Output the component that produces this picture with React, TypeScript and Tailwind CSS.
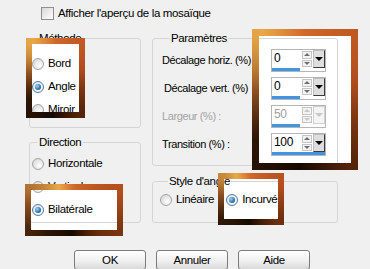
import React from "react";

const frameBorder =
  "[border-image:conic-gradient(from_0deg,#d2672a,#b04c1c_70deg,#6a2e0c_130deg,#140900_185deg,#2e1606_230deg,#8e5020_280deg,#e8a848_325deg,#d2672a)_1]";

const Radio = ({ checked }: { checked?: boolean }) => (
  <span
    className={
      checked
        ? "flex items-center justify-center w-[12px] h-[12px] shrink-0 rounded-full border border-[#4f7ba1] bg-[radial-gradient(circle_at_65%_65%,#ffffff,#d6dde4)]"
        : "flex items-center justify-center w-[12px] h-[12px] shrink-0 rounded-full border border-[#a5a5a5] bg-[radial-gradient(circle_at_65%_65%,#ffffff,#cfcfcf)]"
    }
  >
    {checked && (
      <span className="w-[6px] h-[6px] rounded-full bg-[radial-gradient(circle_at_35%_35%,#9fd4f5,#236aa3_65%,#123f66)]" />
    )}
  </span>
);

const RadioRow = ({ label, checked }: { label: string; checked?: boolean }) => (
  <div className="flex items-center gap-[4px] h-[23px]">
    <Radio checked={checked} />
    <span>{label}</span>
  </div>
);

const Spin = ({
  value,
  disabled,
  full,
}: {
  value: string;
  disabled?: boolean;
  full?: boolean;
}) => (
  <div className="flex flex-col w-[55px] h-[23px] border border-[#b5b5b5] bg-white">
    <div className="flex flex-1">
      <span
        className={
          disabled
            ? "flex-1 pl-[2px] leading-[17px] text-[12px] text-[#a0a0a0]"
            : "flex-1 pl-[2px] leading-[17px] text-[12px]"
        }
      >
        {value}
      </span>
      <div className="flex flex-col gap-px w-[10px] py-px mr-px">
        <div className="flex flex-1 items-center justify-center border border-[#c5c5c5] bg-[#f3f3f3]">
          <div
            className={
              disabled
                ? "w-0 h-0 border-x-[3px] border-x-transparent border-b-[3px] border-b-[#c8c8c8]"
                : "w-0 h-0 border-x-[3px] border-x-transparent border-b-[3px] border-b-[#6e6e6e]"
            }
          />
        </div>
        <div className="flex flex-1 items-center justify-center border border-[#c5c5c5] bg-[#f3f3f3]">
          <div
            className={
              disabled
                ? "w-0 h-0 border-x-[3px] border-x-transparent border-t-[3px] border-t-[#c8c8c8]"
                : "w-0 h-0 border-x-[3px] border-x-transparent border-t-[3px] border-t-[#6e6e6e]"
            }
          />
        </div>
      </div>
      <div
        className={
          disabled
            ? "flex items-center justify-center w-[12px] border border-[#d0d0d0] bg-[#f4f4f4]"
            : "flex items-center justify-center w-[12px] border border-t-[#bdbdbd] border-l-[#bdbdbd] border-r-[#3a3a3a] border-b-[#3a3a3a] bg-[#dedede]"
        }
      >
        <div
          className={
            disabled
              ? "w-0 h-0 border-x-[4px] border-x-transparent border-t-[4px] border-t-[#c8c8c8]"
              : "w-0 h-0 border-x-[4px] border-x-transparent border-t-[4px] border-t-black"
          }
        />
      </div>
    </div>
    <div className={full ? "h-[3px] w-full bg-[#3f95e4]" : "h-[3px] w-[28px] bg-[#3f95e4]"} />
  </div>
);

const ParamRow = ({
  label,
  value,
  disabled,
  full,
  indent,
}: {
  label: string;
  value: string;
  disabled?: boolean;
  full?: boolean;
  indent?: boolean;
}) => (
  <div className="flex items-center h-[23px]">
    <span
      className={
        "w-[109px] text-[11px] tracking-[-0.4px] " +
        (indent ? "pl-[2px] " : "") +
        (disabled ? "text-[#a3a3a3]" : "")
      }
    >
      {label}
    </span>
    <Spin value={value} disabled={disabled} full={full} />
  </div>
);

const Btn = ({ label }: { label: string }) => (
  <button className="w-[72px] h-[20px] rounded-[3px] border border-[#7b7b7b] bg-[linear-gradient(#ffffff,#f0f0f0_55%,#d9d9d9)] leading-[18px]">
    {label}
  </button>
);

export default function App() {
  return (
    <div className="relative w-[370px] h-[269px] overflow-hidden bg-[#f0f0f0] text-[11.5px] tracking-[-0.35px] leading-[15px] text-black font-['Liberation_Sans',Arial,sans-serif]">
      {/* white fills behind the highlight frames */}
      <div className="absolute z-0 left-[32px] top-[44px] w-[47px] h-[68px] bg-white" />
      <div className="absolute z-0 left-[31px] top-[190px] w-[86px] h-[40px] bg-white" />
      <div className="absolute z-0 left-[259px] top-[36px] w-[92px] h-[127px] bg-white" />
      <div className="absolute z-0 left-[224px] top-[179px] w-[54px] h-[40px] bg-white" />

      <div className="relative z-10 flex flex-col h-full">
        <div className="flex items-center gap-[4px] pl-[41px] pt-[6px]">
          <span className="w-[13px] h-[13px] border border-[#8f8f8f] bg-[linear-gradient(135deg,#d8d8d8,#ffffff)]" />
          <span>Afficher l'aperçu de la mosaïque</span>
        </div>

        <div className="flex gap-[11px] pl-[29px] mt-[10px]">
          <div className="flex flex-col gap-[7px] w-[112px]">
            <fieldset className="h-[97px] border border-[#d5d5d5] rounded-[3px] pl-[2px] pt-[7px]">
              <legend className="ml-[5px] px-[2px] leading-[14px]">Méthode</legend>
              <RadioRow label="Bord" />
              <RadioRow label="Angle" checked />
              <RadioRow label="Miroir" />
            </fieldset>
            <fieldset className="h-[88px] border border-[#d5d5d5] rounded-[3px] pl-[2px] pt-[3px]">
              <legend className="ml-[5px] px-[2px] leading-[14px]">Direction</legend>
              <RadioRow label="Horizontale" />
              <RadioRow label="Verticale" />
              <RadioRow label="Bilatérale" checked />
            </fieldset>
          </div>

          <div className="flex flex-col gap-[8px] w-[186px]">
            <fieldset className="flex flex-col gap-[5px] h-[135px] border border-[#d5d5d5] rounded-[3px] pl-[9px] pt-[4px]">
              <legend className="ml-[8px] px-[1px] leading-[14px]">Paramètres</legend>
              <ParamRow label="Décalage horiz. (%)" value="0" />
              <ParamRow label="Décalage vert. (%)" value="0" indent />
              <ParamRow label="Largeur (%) :" value="50" disabled />
              <ParamRow label="Transition (%) :" value="100" full />
            </fieldset>
            <fieldset className="flex h-[49px] border border-[#d5d5d5] rounded-[3px] pl-[7px] gap-[12px]">
              <legend className="ml-[8px] px-[1px] leading-[14px]">Style d'angle</legend>
              <RadioRow label="Linéaire" />
              <RadioRow label="Incurvé" checked />
            </fieldset>
          </div>
        </div>

        <div className="flex gap-[10px] pl-[74px] mt-[27px]">
          <Btn label="OK" />
          <Btn label="Annuler" />
          <Btn label="Aide" />
        </div>
      </div>

      {/* highlight frames drawn over the dialog */}
      <div className={"absolute z-20 pointer-events-none left-[26px] top-[38px] w-[59px] h-[80px] border-[6px] border-solid " + frameBorder} />
      <div className={"absolute z-20 pointer-events-none left-[25px] top-[184px] w-[98px] h-[52px] border-[6px] border-solid " + frameBorder} />
      <div className={"absolute z-20 pointer-events-none left-[252px] top-[29px] w-[106px] h-[141px] border-[7px] border-solid " + frameBorder} />
      <div className={"absolute z-20 pointer-events-none left-[218px] top-[173px] w-[66px] h-[52px] border-[6px] border-solid " + frameBorder} />
    </div>
  );
}
